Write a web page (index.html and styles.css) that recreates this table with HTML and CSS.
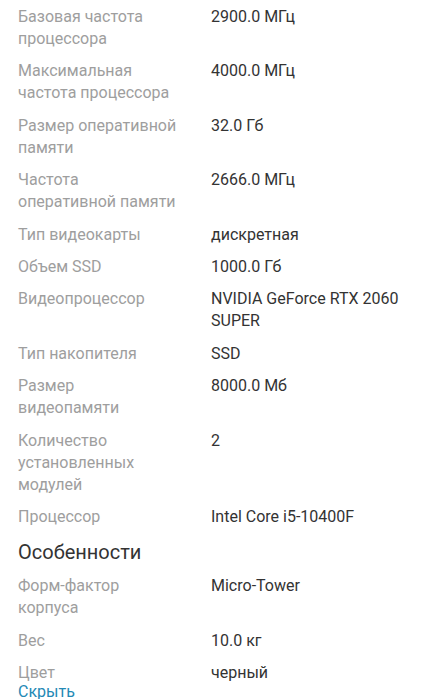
FILE: index.html
```html
<!DOCTYPE html>
<html lang="ru">
<head>
    <meta charset="UTF-8">
    <meta name="viewport" content="width=device-width, initial-scale=1.0">
    <title>Характеристики</title>
    <link rel="stylesheet" href="styles.css">
</head>
<body>
    <div class="specs">
        <div class="spec-row"><div class="spec-name">Базовая частота процессора</div><div class="spec-value">2900.0 МГц</div></div>
        <div class="spec-row"><div class="spec-name">Максимальная частота процессора</div><div class="spec-value">4000.0 МГц</div></div>
        <div class="spec-row"><div class="spec-name">Размер оперативной памяти</div><div class="spec-value">32.0 Гб</div></div>
        <div class="spec-row"><div class="spec-name">Частота<br>оперативной памяти</div><div class="spec-value">2666.0 МГц</div></div>
        <div class="spec-row"><div class="spec-name">Тип видеокарты</div><div class="spec-value">дискретная</div></div>
        <div class="spec-row"><div class="spec-name">Объем SSD</div><div class="spec-value">1000.0 Гб</div></div>
        <div class="spec-row"><div class="spec-name">Видеопроцессор</div><div class="spec-value">NVIDIA GeForce RTX 2060 SUPER</div></div>
        <div class="spec-row"><div class="spec-name">Тип накопителя</div><div class="spec-value">SSD</div></div>
        <div class="spec-row"><div class="spec-name">Размер<br>видеопамяти</div><div class="spec-value">8000.0 Мб</div></div>
        <div class="spec-row"><div class="spec-name">Количество установленных модулей</div><div class="spec-value">2</div></div>
        <div class="spec-row"><div class="spec-name">Процессор</div><div class="spec-value">Intel Core i5-10400F</div></div>

        <h2 class="spec-group">Особенности</h2>

        <div class="spec-row"><div class="spec-name">Форм-фактор<br>корпуса</div><div class="spec-value">Micro-Tower</div></div>
        <div class="spec-row"><div class="spec-name">Вес</div><div class="spec-value">10.0 кг</div></div>
        <div class="spec-row last"><div class="spec-name">Цвет</div><div class="spec-value">черный</div></div>
    </div>
    <a class="toggle-link" href="#">Скрыть</a>
</body>
</html>
```

FILE: styles.css
```css
body {
    font-family: Roboto, "Noto Sans", sans-serif;
    font-size: 16px;
    line-height: 22px;
    margin: 0;
    padding: 6px 18px 0 18px;
    background-color: #fff;
}

.spec-row {
    display: flex;
    gap: 18px;
    margin-bottom: 10.4px;
}

.spec-row.last {
    margin-bottom: 0;
}

.spec-name {
    width: 175px;
    flex-shrink: 0;
    color: #9e9e9e;
}

.spec-value {
    flex: 1;
    color: #333;
}

.spec-group {
    font-size: 20px;
    font-weight: normal;
    line-height: 28px;
    color: #333;
    margin: 4px 0 9px 0;
}

.toggle-link {
    display: block;
    line-height: 16px;
    color: #2489b5;
    text-decoration: none;
}
```
